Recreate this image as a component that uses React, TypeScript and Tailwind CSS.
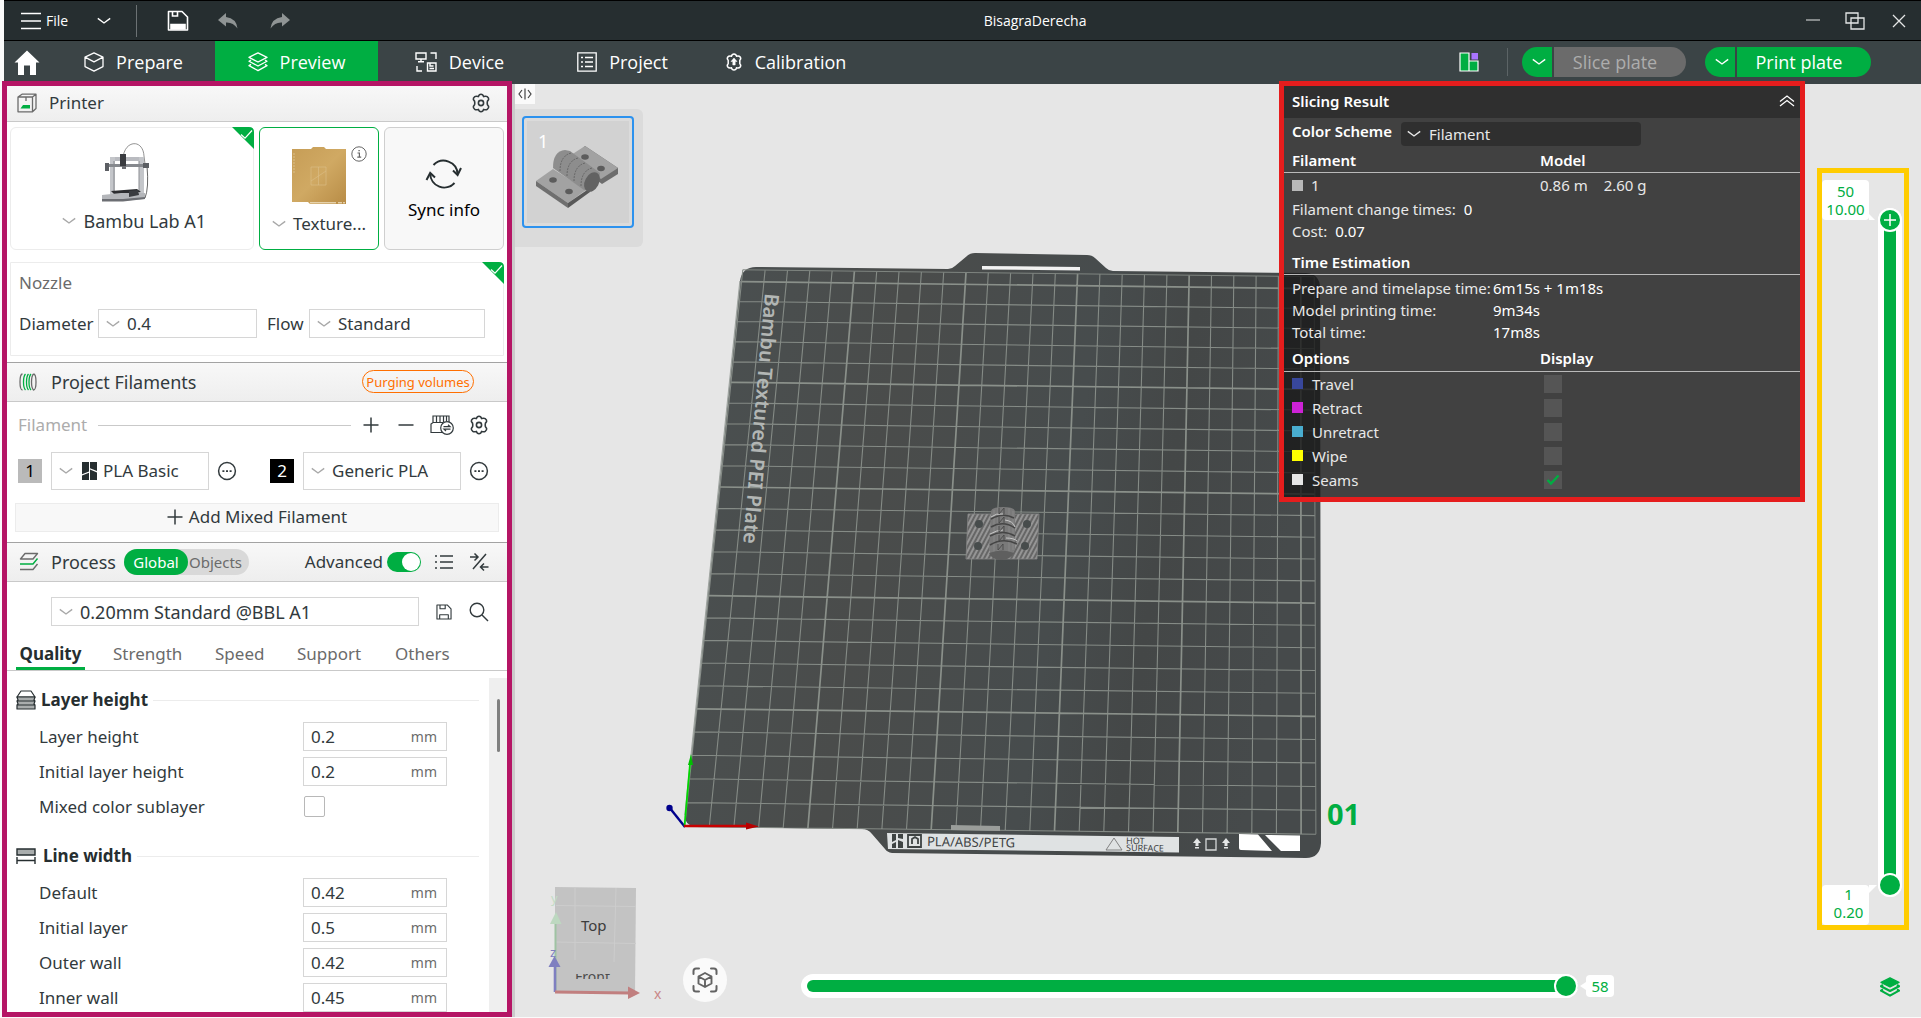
import React from 'react';
import { clsx } from 'clsx';

type Point = [number, number];

const SANS = "font-['Noto_Sans',sans-serif]";
const UI = "font-['Open_Sans',sans-serif]";

/* ---------- small icons ---------- */

function Chevron({ className }: { className?: string }) {
    return (
        <svg viewBox="0 0 14 8" className={clsx('h-2 w-3.5 shrink-0', className)} fill="none" stroke="currentColor" strokeWidth="1.4">
            <path d="M0.8 1.4 L7 6 L13.2 1.4" />
        </svg>
    );
}

function Gear({ className }: { className?: string }) {
    return (
        <svg viewBox="0 0 20 20" className={clsx('size-5 shrink-0', className)} fill="none" stroke="currentColor" strokeWidth="1.6" strokeLinejoin="round">
            <path d="M7.4 3.6 Q8 1.3 10 1.3 Q12 1.3 12.6 3.6 Q15 2.8 16.2 3.6 Q18 4.8 17.6 6.6 Q16 8 16.2 10 Q16 12 17.6 13.4 Q18 15.2 16.2 16.4 Q15 17.2 12.6 16.4 Q12 18.7 10 18.7 Q8 18.7 7.4 16.4 Q5 17.2 3.8 16.4 Q2 15.2 2.4 13.4 Q4 12 3.8 10 Q4 8 2.4 6.6 Q2 4.8 3.8 3.6 Q5 2.8 7.4 3.6 Z" />
            <circle cx="10" cy="10" r="2.6" />
        </svg>
    );
}

function Layers({ className, solid }: { className?: string; solid?: boolean }) {
    return (
        <svg viewBox="0 0 20 20" className={clsx('size-5 shrink-0', className)} fill="none" stroke="currentColor" strokeWidth="1.3" strokeLinejoin="round">
            <path d="M10 0.8 L19 5.4 L10 10 L1 5.4 Z" fill={solid ? 'currentColor' : 'none'} />
            <path d="M3 8 L1 9.2 L10 14 L19 9.2 L17 8" strokeWidth={solid ? 2.2 : 1.3} />
            <path d="M3 12.4 L1 13.6 L10 18.6 L19 13.6 L17 12.4" strokeWidth={solid ? 2.2 : 1.3} />
        </svg>
    );
}

function Floppy({ className }: { className?: string }) {
    return (
        <svg viewBox="0 0 20 20" className={className} fill="none" stroke="currentColor" strokeWidth="1.4" strokeLinejoin="round">
            <path d="M1.2 1.2 H14 L18.8 6 V18.8 H1.2 Z" />
            <path d="M5 1.2 V6 H11.5 V1.2 M4.6 18.8 V13.5 H15.4 V18.8" />
        </svg>
    );
}

function Dots() {
    return (
        <svg viewBox="0 0 20 20" className="size-5">
            <circle cx="10" cy="10" r="8.4" fill="none" stroke="currentColor" strokeWidth="1.5" />
            <path d="M5.4 9.3h2v1.6h-2z M9 9.3h2v1.6H9z M12.6 9.3h2v1.6h-2z" fill="currentColor" />
        </svg>
    );
}

function CornerCheck() {
    return (
        <svg viewBox="0 0 22 22" className="absolute -right-px -top-px size-[22px]">
            <path d="M0 0 H17 Q22 0 22 5 V22 Z" fill="#00ae42" />
            <path d="M9 7.5 L13 11.2 L20 3.5" fill="none" stroke="#fff" strokeWidth="1.2" />
        </svg>
    );
}

/* ---------- top bars ---------- */

function TitleBar() {
    return (
        <header className={clsx('flex h-[41px] shrink-0 items-center border-y border-black bg-[#262e30] text-white', UI)}>
            <button className="ml-4 flex items-center gap-1 text-sm" aria-label="File menu">
                <svg viewBox="0 0 22 18" className="h-[18px] w-[22px]" stroke="#fff" strokeWidth="1.5">
                    <path d="M1 1.5 H21 M1 9 H21 M1 16.5 H21" />
                </svg>
                File
            </button>
            <button className="ml-7 text-white" aria-label="More"><Chevron className="w-4" /></button>
            <span className="ml-6 h-8 w-px bg-[#6c7274]" />
            <button className="ml-7" aria-label="Save">
                <svg viewBox="0 0 22 22" className="ml-0.5 size-[22px]" fill="none" stroke="#fff" strokeWidth="1.6">
                    <path d="M1.5 1.5 H15 L20.5 7 V20 H1.5 Z" strokeLinejoin="round" />
                    <path d="M5.5 2 V6 H10.5 V2" />
                    <path d="M4 14.5 H18 V19 H4 Z" fill="#fff" />
                </svg>
            </button>
            <button className="ml-7 text-[#8f9494]" aria-label="Undo">
                <svg viewBox="0 0 22 18" className="h-[18px] w-[22px]" fill="currentColor">
                    <path d="M9 1 L1 8 L9 14.5 V10.5 Q16 10 20.5 16.5 Q19.5 6.5 9 5 Z" />
                </svg>
            </button>
            <button className="ml-[30px] text-[#8f9494]" aria-label="Redo">
                <svg viewBox="0 0 22 18" className="h-[18px] w-[22px]" fill="currentColor">
                    <path d="M13 1 L21 8 L13 14.5 V10.5 Q6 10 1.5 16.5 Q2.5 6.5 13 5 Z" />
                </svg>
            </button>
            <h1 className="ml-[50px] flex-1 pr-[76px] text-center text-sm">BisagraDerecha</h1>
            <div className="flex items-center gap-6 pr-3.5 text-[#e4e6e6]">
                <button aria-label="Minimize">
                    <svg viewBox="0 0 16 16" className="size-4" stroke="currentColor"><path d="M1 7 H15" /></svg>
                </button>
                <button aria-label="Restore">
                    <svg viewBox="0 0 20 18" className="h-[18px] w-5" fill="none" stroke="currentColor" strokeWidth="1.3">
                        <path d="M1 1 H13 V11 H1 Z M6 6 H19 V17 H6 Z" />
                    </svg>
                </button>
                <button aria-label="Close">
                    <svg viewBox="0 0 16 16" className="ml-0.5 size-4" stroke="currentColor" strokeWidth="1.3"><path d="M2 2 L14 14 M14 2 L2 14" /></svg>
                </button>
            </div>
        </header>
    );
}

const tabs = [
    {
        label: 'Prepare',
        icon: (
            <svg viewBox="0 0 20 20" className="size-5" fill="none" stroke="currentColor" strokeWidth="1.3" strokeLinejoin="round">
                <path d="M10 0.8 L19 5.2 V14.6 L10 19.2 L1 14.6 V5.2 Z M1 5.2 L10 9.8 L19 5.2" />
            </svg>
        ),
    },
    { label: 'Preview', icon: <Layers /> },
    {
        label: 'Device',
        icon: (
            <svg viewBox="0 0 22 20" className="h-5 w-[22px]" fill="none" stroke="currentColor" strokeWidth="1.4">
                <path d="M1 1 H11 V7 H1 Z M6 7 V9.5 M3 9.7 H9 M15.5 1 H21 V7 M2 14 V19 H7" />
                <path d="M12.5 11 H21 V19 H12.5 Z M15 11 V14 H18.5 M14.5 16.5 H19" />
            </svg>
        ),
    },
    {
        label: 'Project',
        icon: (
            <svg viewBox="0 0 20 20" className="size-5" fill="none" stroke="currentColor" strokeWidth="1.3">
                <path d="M0.8 0.8 H19.2 V19.2 H0.8 Z M8 5.5 H16 M8 10 H16 M8 14.5 H16 M4 5.5 H6 M4 10 H6 M4 14.5 H6" />
            </svg>
        ),
    },
    {
        label: 'Calibration',
        icon: (
            <svg viewBox="0 0 18 18" className="size-[18px]" fill="none" stroke="currentColor" strokeWidth="1.5" strokeLinejoin="round">
                <path d="M6.5 3.2 Q7 1 9 1 Q11 1 11.5 3.2 Q14 2.5 15.2 4 Q16.4 5.8 14.8 7.2 V10.8 Q16.4 12.2 15.2 14 Q14 15.5 11.5 14.8 Q11 17 9 17 Q7 17 6.5 14.8 Q4 15.5 2.8 14 Q1.6 12.2 3.2 10.8 V7.2 Q1.6 5.8 2.8 4 Q4 2.5 6.5 3.2 Z" />
                <path d="M9 5 L12 8.5 H10.2 V12 H7.8 V8.5 H6 Z" fill="currentColor" strokeWidth="0.5" />
            </svg>
        ),
    },
];

function NavBar() {
    return (
        <nav className={clsx('flex h-[43px] shrink-0 items-center bg-[#3b4446] text-lg text-white', UI)}>
            <a href="#home" aria-label="Home" className="flex w-12 items-center pl-2.5">
                <svg viewBox="0 0 26 26" className="size-[26px]" fill="#fff">
                    <path d="M13 0.5 L25.5 12.5 H22 V25 H16 V15.5 H10 V25 H4 V12.5 H0.5 Z" />
                </svg>
            </a>
            {tabs.map((tab) => (
                <button
                    key={tab.label}
                    className={clsx('flex h-full w-[163px] items-center justify-center gap-3 pb-px', tab.label === 'Preview' && 'bg-[#00ae42]')}
                >
                    {tab.icon}
                    {tab.label}
                </button>
            ))}
            <div className="ml-auto flex items-center pb-0.5 pr-[50px]">
                <button aria-label="Toggle layout">
                    <svg viewBox="0 0 20 20" className="size-5" stroke="#fff" strokeWidth="1.2">
                        <path d="M1 1 H10 V19 H1 Z M10 9 H19 V19 H10 Z" fill="#00ae42" />
                        <path d="M12.5 1 H19 V7.5 H12.5 Z" fill="#a974ff" stroke="none" />
                    </svg>
                </button>
                <span className="ml-7 h-7 w-px bg-[#5c6466]" />
                <div className="ml-3.5 flex h-[30px] gap-0.5">
                    <button aria-label="Slice options" className="flex w-[30px] items-center justify-center rounded-l-full bg-[#00ae42] pl-1"><Chevron className="w-4" /></button>
                    <button className="w-[132px] rounded-r-full bg-[#6b6b6b] pr-2.5 leading-7 text-[#adadad]">Slice plate</button>
                </div>
                <div className="ml-[19px] flex h-[30px] gap-0.5">
                    <button aria-label="Print options" className="flex w-[30px] items-center justify-center rounded-l-full bg-[#00ae42] pl-1"><Chevron className="w-4" /></button>
                    <button className="w-[134px] rounded-r-full bg-[#00ae42] pr-2.5 leading-7">Print plate</button>
                </div>
            </div>
        </nav>
    );
}

/* ---------- sidebar ---------- */

interface PickerProps {
    label: string;
    value: string;
    className?: string;
    icon?: React.ReactNode;
}

function Picker({ label, value, className, icon }: PickerProps) {
    return (
        <div className={clsx('flex items-center border border-[#d6d6d6] bg-white pl-[7px]', className)}>
            <Chevron className="mr-[7px] text-[#a8a8a8]" />
            {icon}
            <select aria-label={label} className="h-6 min-w-0 flex-1 appearance-none bg-transparent outline-none">
                <option>{value}</option>
            </select>
        </div>
    );
}

function SectionHeader({ children, first }: { children: React.ReactNode; first?: boolean }) {
    return (
        <div
            className={clsx(
                'flex shrink-0 items-center border-b border-b-[#c9c9c9] bg-gradient-to-b from-[#f8f8f8] to-[#eeeeee] pb-px pl-3',
                first ? 'h-9' : 'h-10 border-t border-t-[#a3a3a3]',
            )}
        >
            {children}
        </div>
    );
}

function PrinterPicture() {
    return (
        <svg viewBox="0 0 50 60" className="mr-3 h-[60px] w-[50px]" fill="none">
            <path d="M22 18 C22 -2 42 -4 43 14 L44 22" stroke="#777" strokeWidth="0.8" />
            <path d="M46 24 Q48 46 44 56" stroke="#555" strokeWidth="0.9" />
            <path d="M9 15 H43 V19 H9 Z" fill="#b9bbc0" />
            <path d="M9 15 H14 V52 H9 Z M38 15 H43 V54 H38 Z" fill="#c4c6ca" />
            <path d="M13 19 V50 M38 19 V50" stroke="#8b8d92" />
            <path d="M4 22 H47 V25 H4 Z" fill="#85888d" />
            <path d="M19 12 H25 V24 H19 Z" fill="#3a3c40" />
            <path d="M21 24 H25 V27 H21 Z" fill="#6c6e73" />
            <path d="M4 21 H8 V29 H4 Z M42 21 H48 V26 H42 Z" fill="#5c5f64" />
            <path d="M10 49 L36 47 L40 50 L14 53 Z" fill="#2c2d30" />
            <path d="M1 53 L20 51 H44 V57 L20 59 H1 Z" fill="#b4b6ba" />
            <path d="M28 49 L37 48 L38 53 L28 55 Z" fill="#3a3c40" />
            <path d="M1 57 H22 L44 55 V57 L22 59.5 H1 Z" fill="#6c6e73" />
        </svg>
    );
}

function PrinterSection() {
    return (
        <>
            <SectionHeader first>
                <svg viewBox="0 0 20 20" className="-ml-0.5 size-5" fill="none" stroke="#6b6b6b" strokeWidth="1.3" strokeLinejoin="round">
                    <path d="M1 4 L5 1.2 H19 V15.5 L15.5 18.8 H1 Z M1 4 H15.5 V18.8 M15.5 4 L19 1.2 M9 4 V8" />
                    <path d="M3.5 15.5 L6 12 H13 V15.5 Z" fill="#00ae42" stroke="none" />
                </svg>
                <h2 className="ml-3">Printer</h2>
                <button className="ml-auto mr-4" aria-label="Printer settings"><Gear /></button>
            </SectionHeader>
            <div className="mx-[3px] mt-[5px] flex h-[123px] shrink-0 gap-[5px]">
                <div className="relative flex w-[244px] flex-col items-center rounded-md border border-[#ececec] pt-3.5">
                    <CornerCheck />
                    <PrinterPicture />
                    <div className="mt-[7px] flex items-center gap-2 pl-1">
                        <Chevron className="text-[#a8a8a8]" />
                        <select aria-label="Printer model" className="h-6 appearance-none bg-transparent text-lg leading-6">
                            <option>Bambu Lab A1</option>
                        </select>
                    </div>
                </div>
                <div className="relative flex w-[120px] flex-col items-center rounded-md border border-[#00ae42] pt-[19px]">
                    <svg viewBox="0 0 54 58" className="h-[58px] w-[54px]">
                        <defs>
                            <linearGradient id="gold" x1="0" y1="0" x2="1" y2="1">
                                <stop offset="0" stopColor="#c69d56" />
                                <stop offset="0.5" stopColor="#d0a963" />
                                <stop offset="1" stopColor="#b88c46" />
                            </linearGradient>
                        </defs>
                        <path d="M0 2 H19 L21 0 H32 L34 2 H54 V57 H18 L16 55 H0 Z" fill="url(#gold)" />
                        <path d="M19 20 H34 V38 H19 Z M26.5 20 V38 M19 34 L34 24" fill="none" stroke="#dcc08a" strokeWidth="0.6" />
                        <path d="M18 55.8 H53" stroke="#f4ead2" strokeDasharray="26 2 4 1" />
                        <path d="M2 6 V26" stroke="#dcc08a" strokeDasharray="2 1" />
                    </svg>
                    <button aria-label="Plate info" className="absolute right-[11px] top-[18px]">
                        <svg viewBox="0 0 16 16" className="size-4" fill="none" stroke="#666">
                            <circle cx="8" cy="8" r="7.2" />
                            <path d="M6.5 7 H8.4 V11 M6.3 11.2 H10.2 M7.4 4.6 H8.8" strokeWidth="1.2" />
                        </svg>
                    </button>
                    <button className="mt-[7px] flex items-center gap-[7px]">
                        <Chevron className="text-[#a8a8a8]" />
                        Texture...
                    </button>
                </div>
                <button className="flex w-[120px] flex-col items-center rounded-md border border-[#cfcfcf] bg-[#f8f8f8] pt-[30px] text-black">
                    <svg viewBox="0 0 38 32" className="h-8 w-[38px]" fill="none" stroke="#262e30" strokeWidth="2">
                        <path d="M8.5 7 A14 14 0 0 1 32.6 16 M29.5 25 A14 14 0 0 1 5.2 16" />
                        <path d="M28 12.5 L32.6 17 L36 10 M1.5 22 L5.2 15 L10 19.5" />
                    </svg>
                    <span className="mt-2">Sync info</span>
                </button>
            </div>
            <div className="relative mx-[3px] mb-1.5 mt-3 h-[94px] shrink-0 rounded-tr-md border border-[#ececec] px-2 pt-2">
                <CornerCheck />
                <h3 className="text-[#6b6b6b]">Nozzle</h3>
                <div className="mt-3.5 flex items-center">
                    <span className="w-[79px]">Diameter</span>
                    <Picker label="Nozzle diameter" value="0.4" className="h-[29px] w-[159px]" />
                    <span className="ml-2.5 w-[42px]">Flow</span>
                    <Picker label="Nozzle flow" value="Standard" className="h-[29px] w-44" />
                </div>
            </div>
        </>
    );
}

function FilamentSection() {
    return (
        <>
            <SectionHeader>
                <svg viewBox="0 0 18 18" className="size-[18px]" fill="none" strokeWidth="1.3">
                    <path d="M3.5 1 Q1 1 1 9 Q1 17 3.5 17 M14.5 1 Q17 1 17 9 Q17 17 14.5 17 Q12.5 15 12.5 9 Q12.5 3 14.5 1" stroke="#6b6b6b" />
                    <path d="M6.5 1 Q4.5 3 4.5 9 Q4.5 15 6.5 17 M9.5 1 Q7.5 3 7.5 9 Q7.5 15 9.5 17 M12 1 Q10 3 10 9 Q10 15 12 17" stroke="#00ae42" />
                </svg>
                <h2 className="ml-3.5 text-lg leading-6">Project Filaments</h2>
                <button className="ml-auto mr-[33px] h-[23px] w-28 rounded-full border border-[#ff6f00] text-[13px] leading-5 text-[#ff6f00]">Purging volumes</button>
            </SectionHeader>
            <div className="mb-1 flex h-[46px] shrink-0 items-center pl-[11px] pr-[18px]">
                <span className="w-20 text-[#acacac]">Filament</span>
                <span className="mr-3 h-px flex-1 bg-[#c9c9c9]" />
                <button aria-label="Add filament">
                    <svg viewBox="0 0 16 16" className="size-4" stroke="currentColor" strokeWidth="1.5"><path d="M0.5 8 H15.5 M8 0.5 V15.5" /></svg>
                </button>
                <button aria-label="Remove filament" className="ml-[19px]">
                    <svg viewBox="0 0 16 16" className="size-4" stroke="currentColor" strokeWidth="1.5"><path d="M0.5 8 H15.5" /></svg>
                </button>
                <button aria-label="Sync filaments" className="ml-4">
                    <svg viewBox="0 0 24 20" className="h-5 w-6" fill="none" stroke="currentColor" strokeWidth="1.2">
                        <path d="M3 7.5 V1 H19 V7 M6.5 1 V7 M10 1 V7 M13.5 1 V7 M16.5 1 V6 M12 17.5 H1 V9 L3 7.5 H13" />
                        <circle cx="17" cy="13" r="6.3" />
                        <path d="M13.5 11.6 H20 L18 9.8 M20.5 14.2 H14 L16 16" />
                    </svg>
                </button>
                <button aria-label="Filament settings" className="ml-[15px]"><Gear /></button>
            </div>
            <div className="flex h-[38px] shrink-0 items-center pl-[11px]">
                <span className="mr-[9px] size-6 bg-[#bababa] text-center text-black">1</span>
                <Picker
                    label="Filament 1"
                    value="PLA Basic"
                    className="h-[38px] w-[158px]"
                    icon={
                        <svg viewBox="0 0 15 18" className="ml-0.5 mr-1.5 h-[18px] w-[15px] shrink-0" fill="#262e30">
                            <path d="M0 0 H7 V9.6 L0 12.2 Z M0 13.4 L7 10.8 V18 H0 Z M8 0 H15 V9 L8 6.2 Z M8 7.6 L15 10.4 V18 H8 Z" />
                        </svg>
                    }
                />
                <button aria-label="Edit filament 1" className="ml-2"><Dots /></button>
                <span className="ml-[33px] mr-[9px] size-6 bg-black text-center text-white">2</span>
                <Picker label="Filament 2" value="Generic PLA" className="h-[38px] w-[158px]" />
                <button aria-label="Edit filament 2" className="ml-2"><Dots /></button>
            </div>
            <button className="mx-2 mb-2.5 mt-[13px] flex h-[29px] shrink-0 items-center justify-center gap-1.5 border border-[#ececec] bg-[#f8f8f8] pb-0.5">
                <svg viewBox="0 0 16 16" className="size-4" stroke="currentColor" strokeWidth="1.5"><path d="M0.5 8 H15.5 M8 0.5 V15.5" /></svg>
                Add Mixed Filament
            </button>
        </>
    );
}

const settingTabs = [
    { label: 'Quality', width: 'w-[69px]', active: true },
    { label: 'Strength', width: 'w-[74px]' },
    { label: 'Speed', width: 'w-[54px]' },
    { label: 'Support', width: 'w-[70px]' },
    { label: 'Others', width: 'w-[58px]' },
];

const groups = [
    {
        title: 'Layer height',
        icon: (
            <svg viewBox="0 0 20 20" className="size-5 shrink-0" fill="#a9adad" stroke="#262e30" strokeWidth="1.2" strokeLinejoin="round">
                <path d="M1 7 L5 1 H15 L19 7 Z" fill="#fff" />
                <path d="M1 7 H19 L18 10 L19 11 H1 L2 10 Z M1 11 H19 L18 14 L19 15 H1 L2 14 Z M1 15 H19 V19 H1 Z" />
            </svg>
        ),
        rows: [
            { label: 'Layer height', value: '0.2' },
            { label: 'Initial layer height', value: '0.2' },
            { label: 'Mixed color sublayer' },
        ],
    },
    {
        title: 'Line width',
        icon: (
            <svg viewBox="0 0 20 16" className="mr-0.5 h-4 w-5 shrink-0" fill="none" stroke="#262e30" strokeWidth="1.4">
                <path d="M1 1 H19 V7 H1 Z" fill="#a9adad" />
                <path d="M1 9 V16 M19 9 V16 M1 12.5 H19" />
            </svg>
        ),
        rows: [
            { label: 'Default', value: '0.42' },
            { label: 'Initial layer', value: '0.5' },
            { label: 'Outer wall', value: '0.42' },
            { label: 'Inner wall', value: '0.45' },
        ],
    },
];

function SettingRow({ id, label, value }: { id: string; label: string; value?: string }) {
    return (
        <div className="flex h-[29px] items-center pl-8">
            <label htmlFor={id} className="w-64">{label}</label>
            {value ? (
                <div className="ml-2 flex h-[29px] w-36 items-center border border-[#d6d6d6] pl-[7px] pr-[9px]">
                    <input id={id} defaultValue={value} className="min-w-0 flex-1 outline-none" />
                    <span className="text-sm text-[#6b6b6b]">mm</span>
                </div>
            ) : (
                <input id={id} type="checkbox" className="ml-[9px] size-[21px] appearance-none rounded-xs border border-[#b8b8b8] bg-white checked:bg-[#00ae42]" />
            )}
        </div>
    );
}

function ProcessSection() {
    return (
        <>
            <SectionHeader>
                <svg viewBox="0 0 20 20" className="size-5" fill="none" strokeWidth="1.4" strokeLinejoin="round">
                    <path d="M6 1.5 H18.5 L14 7 H1.5 Z" stroke="#6b6b6b" />
                    <path d="M18.5 6.5 L14 12 H1" stroke="#00ae42" />
                    <path d="M18.5 12 L14 17.5 H1" stroke="#6b6b6b" />
                </svg>
                <h2 className="ml-3 w-[73px] text-lg leading-6">Process</h2>
                <div className="flex h-[26px] w-[125px] rounded-full bg-[#d9d9d9] text-[15px]">
                    <button className="w-16 rounded-full bg-[#00ae42] text-white">Global</button>
                    <button className="flex-1 pr-1.5 text-[#6b6b6b]">Objects</button>
                </div>
                <label htmlFor="advanced" className="ml-auto">Advanced</label>
                <input
                    id="advanced"
                    type="checkbox"
                    role="switch"
                    defaultChecked
                    className="ml-1 h-5 w-[34px] appearance-none rounded-full bg-[#00ae42] before:ml-[15px] before:mt-px before:block before:size-[18px] before:rounded-full before:bg-white"
                />
                <button aria-label="Setting list" className="ml-3.5">
                    <svg viewBox="0 0 18 16" className="h-4 w-[18px]" stroke="currentColor" strokeWidth="1.5"><path d="M5 2 H18 M5 8 H18 M5 14 H18 M0 2 H2 M0 8 H2 M0 14 H2" /></svg>
                </button>
                <button aria-label="Compare presets" className="ml-4 mr-[18px]">
                    <svg viewBox="0 0 20 20" className="size-5" fill="none" stroke="currentColor" strokeWidth="1.5"><path d="M17 2 L4 17 M1 5 H9 M5.5 1.5 L9 5 L5.5 8.5 M19.5 15 H11.5 M15 11.5 L11.5 15 L15 18.5" /></svg>
                </button>
            </SectionHeader>
            <div className="mt-[15px] flex shrink-0 items-center pl-11">
                <Picker label="Process preset" value="0.20mm Standard @BBL A1" className="h-[29px] w-[368px] text-lg leading-6" />
                <button aria-label="Save preset" className="ml-[17px]"><Floppy className="size-4" /></button>
                <button aria-label="Search settings" className="ml-[17px]">
                    <svg viewBox="0 0 20 20" className="size-5" fill="none" stroke="currentColor" strokeWidth="1.4"><circle cx="8" cy="8" r="6.8" /><path d="M13 13 L19 19" /></svg>
                </button>
            </div>
            <div className="flex h-[45px] shrink-0 items-end gap-7 border-b border-[#c9c9c9] pl-[9px] text-[#6b6b6b]">
                {settingTabs.map((tab) => (
                    <button key={tab.label} className={clsx('flex h-7 border-b-3', tab.width, tab.active ? 'justify-center border-[#00ae42] font-bold text-[#262e30]' : 'border-transparent')}>
                        {tab.label}
                    </button>
                ))}
            </div>
            <div className="flex min-h-0 flex-1">
                <div className="min-w-0 flex-1 overflow-hidden pt-3.5">
                    {groups.map((group) => (
                        <section key={group.title} className="mb-5 flex flex-col gap-1.5">
                            <div className="mb-px flex h-[30px] items-center gap-[5px] pl-[9px]">
                                {group.icon}
                                <h3 className="font-bold text-[#262e30]">{group.title}</h3>
                                <span className="mr-2.5 h-px flex-1 bg-[#ececec]" />
                            </div>
                            {group.rows.map((row) => (
                                <SettingRow key={row.label} id={`${group.title}-${row.label}`.replace(/ /g, '-')} {...row} />
                            ))}
                        </section>
                    ))}
                </div>
                <div className="mt-[7px] w-[18px] shrink-0 bg-[#efefef] pl-2 pt-[21px]">
                    <div className="h-[53px] w-[3px] rounded-full bg-[#808080]" />
                </div>
            </div>
        </>
    );
}

/* ---------- build plate ---------- */

// Plate cell coordinates -> screen, with the camera's slight perspective
function project(u: number, v: number): Point {
    const w = 1 + 0.0041 * v;
    return [(684.6 + 24.66 * u + 5.32 * v) / w, (826.5 + 0.3 * u - 20.64 * v) / w];
}

function segment(a: Point, b: Point) {
    return `M${a[0].toFixed(1)} ${a[1].toFixed(1)} L${b[0].toFixed(1)} ${b[1].toFixed(1)}`;
}

const SIZE = 25.6;
const steps = Array.from({ length: 26 }, (_, i) => i);
const isBold = (i: number) => i % 5 === 0 && i > 0;
const gridPath = (bold: boolean) =>
    steps
        .filter((i) => isBold(i) === bold)
        .map((i) => segment(project(i, 0), project(i, SIZE)) + segment(project(0, i), project(SIZE, i)))
        .join(' ');

const holes: Point[] = [[979, 524], [1027, 524], [978, 546], [1025, 546]];

function HingeOnPlate() {
    return (
        <g>
            <defs>
                <pattern id="hatch" width="4" height="4" patternUnits="userSpaceOnUse" patternTransform="rotate(28)">
                    <rect width="4" height="4" fill="#666" />
                    <rect width="2" height="4" fill="#959595" />
                </pattern>
            </defs>
            <path d="M968 514 H1039 L1037 559 H966 Z" fill="url(#hatch)" stroke="#858585" strokeWidth="0.8" />
            {holes.map(([x, y]) => (
                <circle key={`${x}-${y}`} cx={x} cy={y} r="4" fill="#474c4c" />
            ))}
            <path d="M991 511 Q992 507 1003 507 Q1014 507 1015 511 L1015 549 L1011 556 H993 L989 550 Z" fill="#7a7a7a" />
            <path d="M994 510 V552 M998 508 V552 M1009 508 V553 M1013 511 V550" stroke="#8d8d8d" strokeWidth="0.8" />
            <path d="M991 519 Q1003 512 1014 518 M991 527 Q1003 520 1015 528 M990 536 Q1003 529 1015 536 M990 545 Q1003 537 1017 544" fill="none" stroke="#454545" strokeWidth="1.6" />
            <path d="M991 517 Q996 513 1003 514 M1005 520 Q1013 521 1015 527 M990 534 Q997 530 1003 530 M1006 538 Q1014 538 1017 541" fill="none" stroke="#d0d0d0" strokeWidth="0.9" />
            <path d="M999 508 V514 L1004 508 V514 M999 517 V523 L1004 517 V523 M999 526 V532 L1004 526 V532 M999 535 V541 L1004 535 V541 M998 544 V550 L1003 544 V550" fill="none" stroke="#484848" strokeWidth="0.9" />
            <path d="M989 553 Q1002 548 1014 553 Q1010 560 1001 560 Q992 560 989 553 Z" fill="#5f5f5f" />
        </g>
    );
}

function Scene() {
    return (
        <svg viewBox="515 84 1406 933" preserveAspectRatio="xMidYMid slice" className="absolute inset-0 h-full w-full">
            <defs>
                <linearGradient id="plate" x1="0" y1="0" x2="1" y2="0.15">
                    <stop offset="0" stopColor="#4a5051" />
                    <stop offset="0.35" stopColor="#4a4c4b" />
                    <stop offset="0.65" stopColor="#474c4d" />
                    <stop offset="0.8" stopColor="#444747" />
                    <stop offset="1" stopColor="#464a4b" />
                </linearGradient>
                <clipPath id="frontBand"><path d="M560 974 H630 V979 H560 Z" /></clipPath>
            </defs>
            <path
                d="M756 267 L948 269 Q952 269 955 266 L967 256 Q970 253 975 253 L1087 255 Q1092 255 1095 258 L1106 268 Q1109 271 1113 271 L1306 273 Q1320 274 1320 288 L1321 843 Q1320 858 1306 858 L892 853 Q887 852 885 849 L872 834 Q868 829 862 829 L695 827 Q684 825 685 815 L740 281 Q742 267 756 267 Z"
                fill="url(#plate)"
            />
            <path d="M982 266 L1080 267 V270.5 L982 269.5 Z" fill="#f2f2f2" />
            <path d={gridPath(false)} stroke="#858b86" strokeWidth="1.1" />
            <path d={gridPath(true)} stroke="#8a908a" strokeWidth="1.7" />
            <path d={segment(project(0, SIZE), project(SIZE, SIZE)) + segment(project(SIZE, 0), project(SIZE, SIZE))} stroke="#7f8580" />
            <path d="M740 281 L685 815" stroke="#a0a5a1" strokeWidth="1.4" />
            <path d="M951 825 L1000 826 V831 L951 830 Z" fill="#9a9d9a" />
            <text transform="translate(765 293) rotate(95)" fontSize="20" fontWeight="600" fill="#b2b6b4">Bambu Textured PEI Plate</text>

            <path d="M887 833 L1179 837 V852.5 L888 849 Z" fill="#dfe2e3" />
            <path d="M892 834 H896 V840 L892 842 Z M892 844 L896 842 V848 H892 Z M898 834 H903 V839 L898 838 Z M898 840 L903 842 V848 H898 Z" fill="#3e4343" />
            <path d="M908 835 H921 V847 H908 Z M912 844 V839 L915 837 L918 839 V844" fill="none" stroke="#3e4343" strokeWidth="1.8" />
            <text transform="translate(927 846) rotate(1)" fontSize="13" fill="#3e4343">PLA/ABS/PETG</text>
            <path d="M1114 838 L1122 850 H1106 Z" fill="none" stroke="#777" strokeWidth="0.9" />
            <text transform="translate(1126 844) rotate(1)" fontSize="9" fill="#3e4343">HOT</text>
            <text transform="translate(1126 851) rotate(1)" fontSize="9" fill="#3e4343">SURFACE</text>
            <path d="M1197 838 L1201 843 H1198.5 V846 H1195.5 V843 H1193 Z M1195 847 H1199 V848.5 H1195 Z M1226 838 L1230 843 H1227.5 V846 H1224.5 V843 H1222 Z M1224 847 H1228 V848.5 H1224 Z" fill="#e4e6e6" />
            <path d="M1206 839 H1216 V850 H1206 Z" fill="none" stroke="#d5d8d8" strokeWidth="1.3" />
            <path d="M1239 834 L1258 834.5 L1272 851 L1241 850 Q1239 850 1239 848 Z M1265 835 L1300 835.5 V851 L1281 851 Z" fill="#fff" />

            <text x="1327" y="825" fontSize="29" fontWeight="700" fill="#00ae42">01</text>

            <path d="M685 827 L669 807" stroke="#00008c" strokeWidth="2.4" />
            <circle cx="669.5" cy="808" r="3.2" fill="#00008c" />
            <path d="M684.5 826 L690 764" stroke="#00d800" strokeWidth="1.8" />
            <path d="M691 754 L693 765 H688 Z" fill="#00c000" />
            <path d="M684 826 H748" stroke="#c80000" strokeWidth="2.4" />
            <path d="M746 822.5 L759 826.5 L746 829.5 Z" fill="#b80000" />

            <HingeOnPlate />

            <path d="M555 887 L636 888 L635 993 L555 992 Z" fill="#c3c3c3" />
            <path d="M575 888 V960 M616 888 L614 962 M556 905.5 L636 906.5 M556 942 L636 943.5" stroke="#cdcdcd" fill="none" />
            <text x="581" y="931" fontSize="15" fill="#3c3c3c">Top</text>
            <text x="575" y="982" fontSize="14" fill="#4c4c4c" clipPath="url(#frontBand)">Front</text>
            <path d="M555.5 990 V922" stroke="#9fc3a3" strokeWidth="2" />
            <path d="M556 912 L561.5 924 H550 Z" fill="#bdd8c0" />
            <text x="551" y="903" fontSize="13" fill="#c3dcc5">y</text>
            <path d="M555 992 V966" stroke="#7f7fc0" strokeWidth="2.6" />
            <path d="M554.5 956 L560.5 967 H548.5 Z" fill="#7f7fc0" />
            <text x="550" y="957" fontSize="13" fill="#7f7fc0">z</text>
            <path d="M555 992 L629 993" stroke="#c17f7f" strokeWidth="3" />
            <path d="M628 986.5 L640 993 L628 999 Z" fill="#c17f7f" />
            <text x="654" y="999" fontSize="14" fill="#c98787">x</text>
        </svg>
    );
}

function PlateThumbnail() {
    return (
        <div className="h-[138px] w-32 rounded-r-md bg-[#dbdbdb] pl-[7px] pt-[7px]">
            <button aria-label="Plate 1" className="size-[112px] rounded-sm border-2 border-[#2d92ee] bg-[#dbdbdb] p-[3px]">
                <svg viewBox="527 121 102 102" className="size-full bg-[#d2d2d2]">
                    <text x="538" y="148" fontSize="18" fill="#fff">1</text>
                    <path d="M585 146 L618 168 V174 L602 184 L570 160 Z" fill="#6d6d6d" />
                    <path d="M585 146 L618 168 L601 179 L568 157 Z" fill="#a2a2a2" />
                    <path d="M536 181 L553 169 L586 190 L568 203 Z" fill="#a2a2a2" />
                    <path d="M536 181 L568 203 V208 L536 186 Z" fill="#6f6f6f" />
                    <path d="M568 203 L590 188 V192 L568 208 Z" fill="#585858" />
                    <path d="M553 168 Q553 151 565 150 L570 151 L600 173 Q600 186 588 191 L584 190 Z" fill="#8d8d8d" />
                    <ellipse cx="592" cy="182" rx="7" ry="10.5" transform="rotate(28 592 182)" fill="#626262" />
                    <path d="M571 153 Q560 156 560 171 M578 158 Q567 161 567 176 M585 163 Q574 166 574 181 M592 168 Q581 171 581 186" fill="none" stroke="#5e5e5e" strokeWidth="0.8" strokeDasharray="2 1" />
                    <g fill="#5c5c5c">
                        <ellipse cx="585" cy="157" rx="3.8" ry="2.8" />
                        <ellipse cx="601" cy="168.5" rx="3.8" ry="2.8" />
                        <ellipse cx="553" cy="180" rx="3.8" ry="2.8" />
                        <ellipse cx="569" cy="191.5" rx="3.8" ry="2.8" />
                    </g>
                </svg>
            </button>
        </div>
    );
}

/* ---------- slicing result ---------- */

const options = [
    { label: 'Travel', color: 'bg-[#38479b]' },
    { label: 'Retract', color: 'bg-[#cd22d6]' },
    { label: 'Unretract', color: 'bg-[#49adcf]' },
    { label: 'Wipe', color: 'bg-[#ffff00]' },
    { label: 'Seams', color: 'bg-[#e6e6e6]', checked: true },
];

const times = [
    ['Prepare and timelapse time:', '6m15s + 1m18s'],
    ['Model printing time:', '9m34s'],
    ['Total time:', '17m8s'],
];

function SlicingResult() {
    return (
        <section className="absolute -top-[3px] right-[116px] w-[526px] border-5 border-[#e51d1d] bg-[#181818]/80 pb-[5px] text-[15px] text-[#e8e8e8]">
            <div className="flex h-8 items-center bg-[#2f2f2f] pb-0.5 pl-2 pr-[5px]">
                <h2 className="font-semibold text-white">Slicing Result</h2>
                <button className="ml-auto" aria-label="Collapse">
                    <svg viewBox="0 0 16 12" className="h-3 w-4" fill="none" stroke="#fff" strokeWidth="1.3"><path d="M1 6.5 L8 1 L15 6.5 M1 11 L8 5.5 L15 11" /></svg>
                </button>
            </div>
            <div className="flex h-8 items-start pl-2 pt-1">
                <label htmlFor="scheme" className="w-[109px] font-semibold leading-[18px] text-white">Color Scheme</label>
                <div className="flex h-6 w-60 items-center gap-2 rounded-sm bg-[#2f2f2f] pl-1.5">
                    <Chevron />
                    <select id="scheme" className="flex-1 appearance-none bg-transparent">
                        <option>Filament</option>
                    </select>
                </div>
            </div>
            <table className="w-full table-fixed text-left leading-5">
                <thead>
                    <tr className="h-[22px] border-b border-[#b9b9b9] text-white">
                        <th className="w-64 p-0 pb-0.5 pl-2 font-semibold">Filament</th>
                        <th className="p-0 pb-0.5 font-semibold">Model</th>
                    </tr>
                </thead>
                <tbody>
                    <tr className="h-[25px]">
                        <td className="p-0 pl-2"><span className="mr-2 inline-block size-[11px] bg-[#b8b8b8]" />1</td>
                        <td className="p-0"><span className="mr-4">0.86 m</span>2.60 g</td>
                    </tr>
                </tbody>
            </table>
            <p className="pl-2 leading-[22px]">Filament change times:<span className="ml-2 text-white">0</span></p>
            <p className="pl-2 leading-[22px]">Cost:<span className="ml-2 text-white">0.07</span></p>
            <h3 className="mt-2.5 h-[23px] border-b border-[#b9b9b9] pl-2 font-semibold leading-5 text-white">Time Estimation</h3>
            <dl className="grid grid-cols-[201px_1fr] pl-2 pt-0.5 leading-[22px]">
                {times.map(([label, value]) => (
                    <React.Fragment key={label}>
                        <dt>{label}</dt>
                        <dd className="text-white">{value}</dd>
                    </React.Fragment>
                ))}
            </dl>
            <table className="mt-1 w-full table-fixed text-left leading-5">
                <thead>
                    <tr className="h-[25px] border-b border-[#b9b9b9] text-white">
                        <th className="w-64 p-0 pb-0.5 pl-2 font-semibold">Options</th>
                        <th className="p-0 pb-0.5 font-semibold">Display</th>
                    </tr>
                </thead>
                <tbody>
                    {options.map((option) => (
                        <tr key={option.label} className="h-6">
                            <td className="p-0 pl-2">
                                <label htmlFor={option.label} className="flex items-center gap-[9px]">
                                    <span className={clsx('size-[11px]', option.color)} />
                                    {option.label}
                                </label>
                            </td>
                            <td className="p-0 pl-1">
                                <div className="grid size-[18px] place-items-center bg-[#555]">
                                    <input id={option.label} type="checkbox" defaultChecked={option.checked} className="peer col-start-1 row-start-1 size-[18px] appearance-none" />
                                    <svg viewBox="0 0 14 12" className="pointer-events-none col-start-1 row-start-1 hidden h-3 w-3.5 peer-checked:block" fill="none" stroke="#00ae42" strokeWidth="2.4">
                                        <path d="M1.5 6 L5 9.5 L12.5 1.5" />
                                    </svg>
                                </div>
                            </td>
                        </tr>
                    ))}
                </tbody>
            </table>
        </section>
    );
}

/* ---------- sliders ---------- */

const LAYER_INPUT =
    'pointer-events-none absolute inset-0 m-0 h-full w-6 appearance-none bg-transparent [direction:rtl] [writing-mode:vertical-lr] [&::-webkit-slider-thumb]:pointer-events-auto [&::-webkit-slider-thumb]:size-6 [&::-webkit-slider-thumb]:appearance-none [&::-webkit-slider-thumb]:rounded-full [&::-webkit-slider-thumb]:border-2 [&::-webkit-slider-thumb]:border-white [&::-webkit-slider-thumb]:bg-[#00ae42]';

function LayerSlider() {
    return (
        <div className="absolute bottom-[87px] right-3 top-[84px] flex w-[92px] justify-end border-5 border-[#ffcc00] pb-7 pr-0.5 pt-[35px] text-center text-[15px] text-[#00ae42]">
            <div className="flex flex-col justify-between">
                <div className="relative -mt-7 mr-[9px] w-[47px] rounded bg-white py-0.5 leading-[18px]">
                    50<br />10.00
                    <span className="absolute -right-1.5 bottom-0 border-b-6 border-r-6 border-b-white border-r-transparent" />
                </div>
                <div className="relative -mb-7 mr-[9px] w-[47px] rounded bg-white pb-1 pl-1.5 leading-[18px]">
                    1<br />0.20
                    <span className="absolute -right-2 top-0 border-r-8 border-t-8 border-r-transparent border-t-white" />
                </div>
            </div>
            <div className="relative w-6 rounded-full bg-white p-1.5">
                <div className="h-full w-3 rounded-full bg-[#00ae42]" />
                <input aria-label="Bottom layer" type="range" min="1" max="50" defaultValue="1" className={LAYER_INPUT} />
                <input aria-label="Top layer" type="range" min="1" max="50" defaultValue="50" className={LAYER_INPUT} />
                <svg viewBox="0 0 24 24" className="pointer-events-none absolute left-0 top-0 size-6" stroke="#fff" strokeWidth="1.5"><path d="M6 12 H18 M12 6 V18" /></svg>
            </div>
        </div>
    );
}

function MoveSlider() {
    return (
        <div className="absolute bottom-[19px] left-[286px] right-[307px] flex items-center">
            <div className="flex-1 rounded-full bg-white py-1.5 pl-1.5">
                <input
                    aria-label="Move"
                    type="range"
                    min="1"
                    max="58"
                    defaultValue="58"
                    className="m-0 block h-3 w-full appearance-none rounded-full bg-[#00ae42] [&::-webkit-slider-thumb]:size-6 [&::-webkit-slider-thumb]:appearance-none [&::-webkit-slider-thumb]:rounded-full [&::-webkit-slider-thumb]:border-2 [&::-webkit-slider-thumb]:border-white [&::-webkit-slider-thumb]:bg-[#00ae42]"
                />
            </div>
            <span className="ml-0.5 border-y-4 border-r-6 border-y-transparent border-r-white" />
            <output className="h-[22px] w-7 rounded bg-white text-center text-[15px] leading-[22px] text-[#00ae42]">58</output>
        </div>
    );
}

function Viewport() {
    return (
        <main className="relative min-w-0 flex-1 bg-[#e6e6e6]">
            <Scene />
            <div className="relative flex flex-col items-start gap-[5px]">
                <button aria-label="Collapse sidebar" className="grid size-5 place-items-center bg-[#fafafa]">
                    <svg viewBox="0 0 14 12" className="h-3 w-3.5" fill="none" stroke="#444" strokeWidth="1.2"><path d="M4 2 L1 6 L4 10 M10 2 L13 6 L10 10 M7 0.5 V11.5" /></svg>
                </button>
                <PlateThumbnail />
            </div>
            <SlicingResult />
            <LayerSlider />
            <button aria-label="Fit camera" className="absolute bottom-[15px] left-[168px] grid size-11 place-items-center rounded-full bg-[#fafafa]">
                <svg viewBox="0 0 26 26" className="size-[26px]" fill="none" stroke="#636363" strokeWidth="2" strokeLinejoin="round" strokeLinecap="round">
                    <path d="M1.5 7 V4 Q1.5 1.5 4 1.5 H7 M19 1.5 H22 Q24.5 1.5 24.5 4 V7 M24.5 19 V22 Q24.5 24.5 22 24.5 H19 M7 24.5 H4 Q1.5 24.5 1.5 22 V19" />
                    <path d="M13 6 L19.5 9.5 V16.5 L13 20 L6.5 16.5 V9.5 Z M6.5 9.5 L13 13 L19.5 9.5 M13 13 V20" strokeWidth="1.9" />
                </svg>
            </button>
            <MoveSlider />
            <button aria-label="Layer view" className="absolute bottom-5 right-[21px] text-[#00ae42]"><Layers solid /></button>
        </main>
    );
}

export default function App() {
    return (
        <div className={clsx('flex h-screen flex-col overflow-hidden bg-[#fafafa] pb-px pl-1', SANS)}>
            <TitleBar />
            <NavBar />
            <div className="flex min-h-0 flex-1">
                <aside className="relative z-10 -ml-0.5 -mt-[3px] flex w-[510px] shrink-0 flex-col border-5 border-[#b51565] bg-white text-[17px] leading-6 text-[#323a3d]">
                    <PrinterSection />
                    <FilamentSection />
                    <ProcessSection />
                </aside>
                <div className="w-[3px] shrink-0 bg-[#cbcbcb]" />
                <Viewport />
            </div>
        </div>
    );
}
